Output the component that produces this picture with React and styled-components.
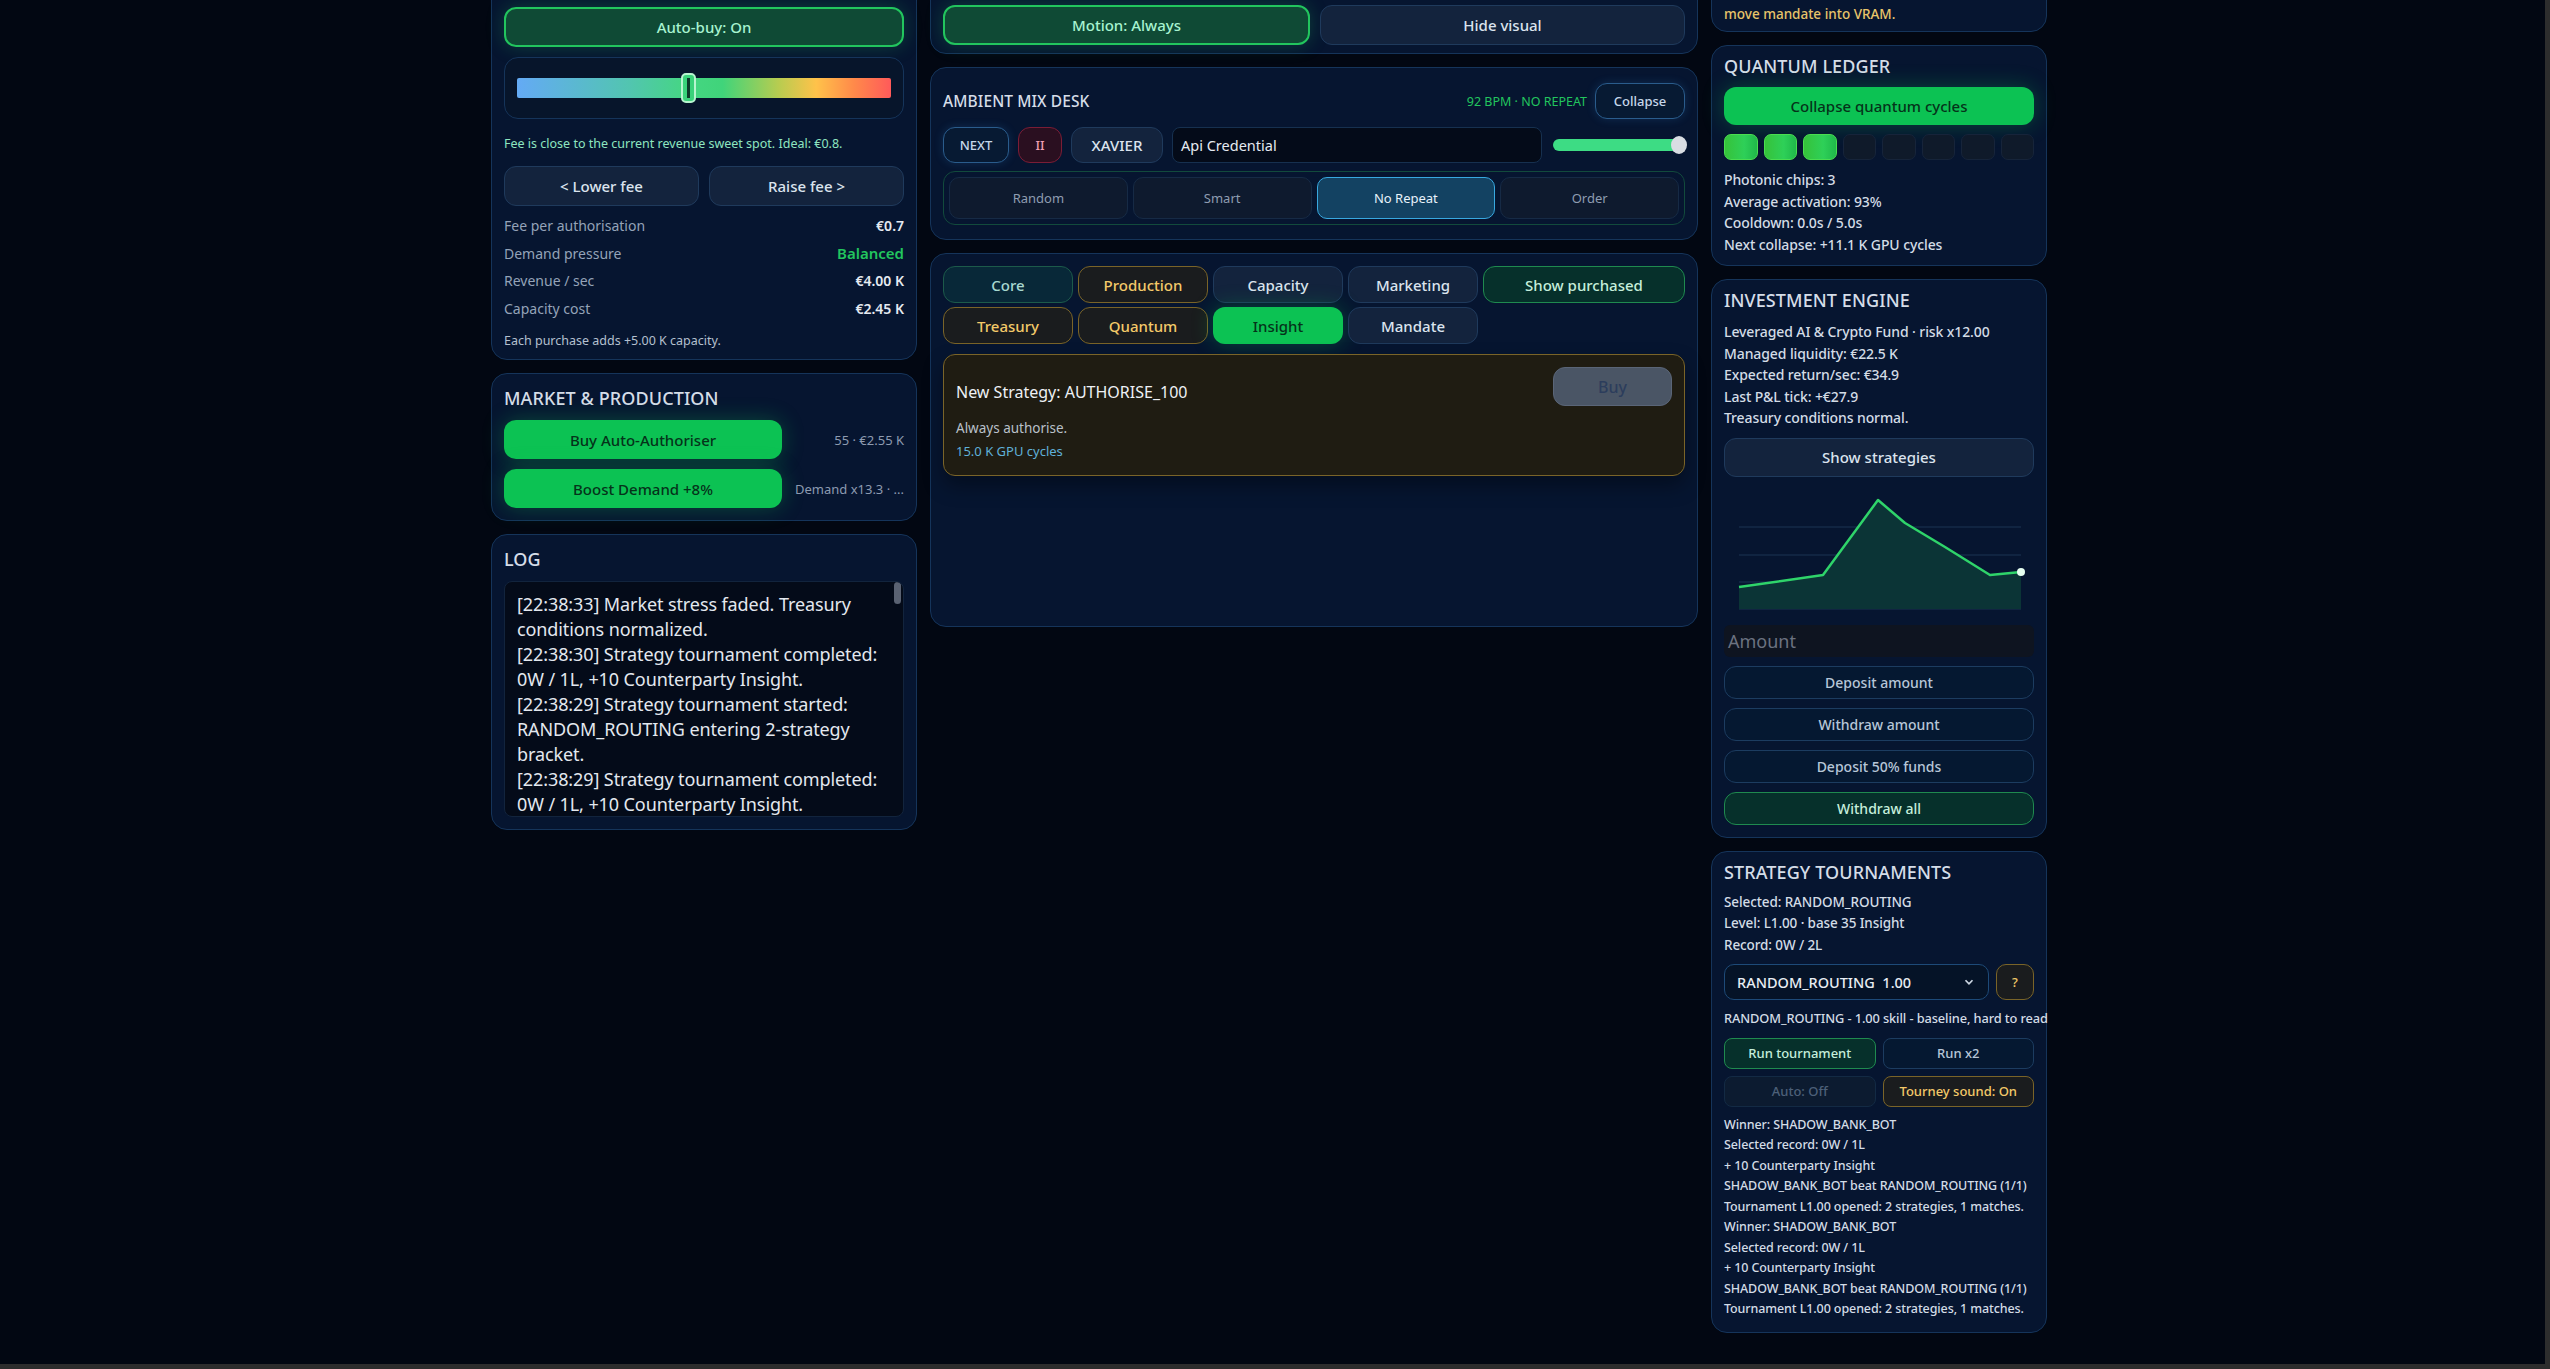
import React from "react";
import styled, { createGlobalStyle, css } from "styled-components";

const Global = createGlobalStyle`
  html, body { margin: 0; padding: 0; background: #2d2d2d; overflow: hidden; }
  body { font-family: "Noto Sans", "Open Sans", sans-serif; }
  * { box-sizing: border-box; }
`;

const Screen = styled.div`
  width: 2545px; height: 1364px; background: #020712; overflow: hidden;
  display: flex; align-items: flex-start; gap: 13px; padding-left: 491px;
`;
const Column = styled.div`
  width: ${p => p.$w}px; display: flex; flex-direction: column; gap: 13px;
  margin-top: ${p => p.$top || 0}px;
`;
const Panel = styled.section`
  background: #061530; border: 1.5px solid #15345a; border-radius: 16px;
  padding: ${p => p.$pad || "12px 12px 14px"};
  display: flex; flex-direction: column; gap: ${p => p.$gap ?? 10}px;
`;
const Title = styled.h2`
  margin: 0; font-size: ${p => p.$size || 18}px; font-weight: 500; color: #d5dde8; letter-spacing: 0.1px;
  line-height: 24px;
`;
const Btn = styled.button`
  font-family: inherit; border-radius: ${p => p.$r || 12}px; height: ${p => p.$h || 40}px;
  font-size: ${p => p.$fs || 15}px; font-weight: 500; cursor: pointer; padding: 0 8px; white-space: nowrap;
  width: ${p => p.$w ? p.$w + "px" : "100%"}; flex: ${p => p.$flex || "none"};
  border: 1.5px solid #1f3a5c; background: #13233d; color: #dbe3ee;
  ${p => p.$v === "toggle" && css`background:#0f4a35;border:2px solid #22c55e;color:#a7f3d0;box-shadow:0 0 18px rgba(34,197,94,.25);`}
  ${p => p.$v === "solid" && css`background:#0cc253;border:none;color:#05331a;box-shadow:0 0 22px rgba(12,194,83,.3);`}
  ${p => p.$v === "outline" && css`background:#051831;border:1.5px solid #1c3c60;color:#b7c6d8;`}
  ${p => p.$v === "outlineGreen" && css`background:#06302b;border:1.5px solid #1f8a4f;color:#c5eedb;`}
  ${p => p.$v === "gold" && css`background:#1a1c1e;border:1.5px solid #7a6428;color:#f3c969;`}
  ${p => p.$v === "tealTab" && css`background:#082838;border:1.5px solid #1c5a4a;color:#a8d8d0;`}
  ${p => p.$v === "dim" && css`background:#0c1b30;border:1.5px solid #132a44;color:#4d6079;`}
  ${p => p.$v === "gray" && css`background:#4a5565;border:1.5px solid #5a6577;color:#2c3d5c;`}
  ${p => p.$v === "blue" && css`background:#071a33;border:1.5px solid #2a5c8c;color:#c6d7ea;box-shadow:0 0 10px rgba(56,140,220,.2);`}
  ${p => p.$v === "red" && css`background:#2a0f20;border:1.5px solid #7a1d36;color:#f0a0b4;`}
`;

/* left */
const SliderBox = styled.div`
  border: 1.5px solid #15345a; border-radius: 14px; height: 62px; background: #07152b;
  display: flex; align-items: center; padding: 0 12px; position: relative;
`;
const Gradient = styled.div`
  height: 20px; width: 100%; border-radius: 2px; position: relative;
  background: linear-gradient(90deg,#64aaf5 0%,#52c5b0 30%,#45d683 45%,#40d47a 55%,#b8cc50 70%,#ffc24a 80%,#ff8a4a 90%,#ff5a5a 100%);
`;
const Thumb = styled.div`
  position: absolute; left: 164px; top: -5px; width: 15px; height: 30px; border-radius: 5px;
  background: #3ad27a; border: 2px solid #b7f5cf;
  &::after { content:""; position:absolute; left:4px; top:3px; width:3px; height:20px; background:#0d3a2a; }
`;
const Hint = styled.p`margin: 6px 0 4px; font-size: 12.5px; color: #8ee6c0;`;
const Row = styled.div`display: flex; gap: ${p => p.$gap ?? 10}px; align-items: center;`;
const Stats = styled.div`display: flex; flex-direction: column; margin-top: -4px;`;
const Stat = styled.div`
  display: flex; justify-content: space-between; height: 27.5px; align-items: center; font-size: 14px;
  span:first-child { color: #94a3b8; }
  span:last-child { color: ${p => p.$green ? "#22c55e" : "#e5eaf1"}; font-weight: 600; font-size: ${p => p.$green ? 15 : 14}px; }
`;
const Small = styled.p`margin: 0; font-size: 12.5px; color: #b4c0cf;`;
const MarketRow = styled.div`display: flex; align-items: center; justify-content: space-between; gap: 8px;`;
const Side = styled.span`font-size: 13px; color: #8d9bb0; white-space: nowrap;`;
const LogBox = styled.div`
  background: #040b19; border: 1.5px solid #12243d; border-radius: 8px; height: 236px; overflow: hidden;
  padding: 10px 20px 0 12px; position: relative; font-size: 18px; line-height: 25px; color: #e3e8ef;
  letter-spacing: -0.1px;
`;
const ScrollThumb = styled.div`position:absolute; right:2px; top:0; width:7px; height:22px; border-radius:4px; background:#5a6272;`;

/* middle */
const MixHead = styled.div`display:flex; align-items:center; justify-content:space-between; margin-top:2px;`;
const Bpm = styled.span`font-size: 12.5px; color: #22c55e; margin-right: 8px;`;
const CredInput = styled.div`
  flex: 1; height: 36px; background: #040b19; border: 1.5px solid #16304f; border-radius: 8px;
  font-size: 14.5px; color: #e5eaf1; display: flex; align-items: center; padding: 0 8px;
`;
const Vol = styled.div`
  width: 132px; height: 12px; border-radius: 6px; background: #3ddc84; position: relative; margin-left: 2px;
  &::after { content:""; position:absolute; right:-2px; top:-3px; width:16px; height:18px; border-radius:50%; background:#d9dde3; }
`;
const Seg = styled.div`
  display: grid; grid-template-columns: repeat(4, 1fr); gap: 5px; padding: 5px;
  border: 1.5px solid #124a3c; border-radius: 12px;
`;
const SegBtn = styled.button`
  font-family: inherit; height: 42px; border-radius: 10px; font-size: 13px;
  background: ${p => p.$on ? "#134262" : "#0e1a2e"}; color: ${p => p.$on ? "#e8f2fb" : "#8f9db1"};
  border: 1.5px solid ${p => p.$on ? "#38a8e0" : "#162a45"};
`;
const Tabs = styled.div`display:grid; grid-template-columns: repeat(4,130px) 1fr; gap: 4px 5px;`;
const Card = styled.div`
  margin-top: 6px; background: #1f1c12; border: 1.5px solid #7a6428; border-radius: 12px;
  padding: 12px; display:flex; justify-content: space-between; align-items:flex-start;
  box-shadow: 0 10px 20px rgba(0,0,0,.35);
`;
const CardText = styled.div`display:flex; flex-direction:column;`;
const CardTitle = styled.div`font-size:16px; color:#eef1f5; margin-top: 14px; margin-bottom: 14px;`;
const CardDesc = styled.div`font-size:13.5px; color:#b9c0c9; line-height: 23px;`;
const CardCost = styled.div`font-size:13px; color:#5fb0d8; line-height: 23px;`;

/* right */
const Cut = styled.div`font-size:13.5px; color:#e8c46a; line-height:22px; font-weight:500; white-space: nowrap;`;
const Chips = styled.div`display:grid; grid-template-columns: repeat(8,1fr); gap:6px;`;
const Chip = styled.div`
  height: 26px; border-radius: 7px;
  background: ${p => p.$on ? "linear-gradient(90deg,#36c23a,#2ed058 60%,#20b84a)" : "#0f1a2a"};
  border: 1px solid ${p => p.$on ? "#4ade50" : "#16243a"};
`;
const Lines = styled.div`
  display:flex; flex-direction:column; font-size:${p => p.$fs || 14}px; line-height:${p => p.$lh || 21.5}px;
  color:#d3dce6; font-weight:500; white-space: nowrap; letter-spacing: -0.1px;
`;
const AmountInput = styled.div`
  height: 32px; background:#0e1420; border-radius:6px; font-size:18px; color:#6b7280; padding: 0 4px;
  display:flex; align-items:center;
`;
const Select = styled.div`
  flex:1; height:36px; border:1.5px solid #1d4a78; border-radius:10px; background:#051327;
  display:flex; align-items:center; justify-content:space-between; padding: 0 12px;
  font-size:14.5px; color:#e8edf3; font-weight:500; white-space: pre;
`;
const Grid2 = styled.div`display:grid; grid-template-columns:1fr 1fr; gap:7px 7px;`;

const Chart = () => (
  <svg width="311" height="130" viewBox="0 0 311 130">
    {[41, 69, 96, 123].map(y => <line key={y} x1="15" x2="297" y1={y} y2={y} stroke="#1b3552" strokeWidth="1" />)}
    <path d="M15 101 L99 89 L154 14 L181 37 L221 61 L266 89 L297 86 L297 123 L15 123 Z" fill="#0b3436" />
    <polyline points="15,101 99,89 154,14 181,37 221,61 266,89 297,86" fill="none" stroke="#2fd46a" strokeWidth="2.5" strokeLinejoin="round" />
    <circle cx="297" cy="86" r="4" fill="#e6fff0" />
  </svg>
);

export default function App() {
  return (
    <>
      <Global />
      <Screen>
        <Column $w={426} $top={-20}>
          <Panel $gap={10} $pad="26px 12px 10px">
            <Btn $v="toggle">Auto-buy: On</Btn>
            <SliderBox>
              <Gradient><Thumb /></Gradient>
            </SliderBox>
            <Hint>Fee is close to the current revenue sweet spot. Ideal: €0.8.</Hint>
            <Row>
              <Btn $flex="1">&lt; Lower fee</Btn>
              <Btn $flex="1">Raise fee &gt;</Btn>
            </Row>
            <Stats>
              <Stat><span>Fee per authorisation</span><span>€0.7</span></Stat>
              <Stat $green><span>Demand pressure</span><span>Balanced</span></Stat>
              <Stat><span>Revenue / sec</span><span>€4.00 K</span></Stat>
              <Stat><span>Capacity cost</span><span>€2.45 K</span></Stat>
            </Stats>
            <Small>Each purchase adds +5.00 K capacity.</Small>
          </Panel>
          <Panel $gap={10} $pad="12px 12px 12px">
            <Title>MARKET &amp; PRODUCTION</Title>
            <MarketRow><Btn $v="solid" $h={39} $w={278}>Buy Auto-Authoriser</Btn><Side>55 · €2.55 K</Side></MarketRow>
            <MarketRow><Btn $v="solid" $h={39} $w={278}>Boost Demand +8%</Btn><Side>Demand x13.3 · ...</Side></MarketRow>
          </Panel>
          <Panel $gap={10} $pad="12px 12px 12px">
            <Title>LOG</Title>
            <LogBox>
              <ScrollThumb />
              [22:38:33] Market stress faded. Treasury conditions normalized.<br />
              [22:38:30] Strategy tournament completed: 0W / 1L, +10 Counterparty Insight.<br />
              [22:38:29] Strategy tournament started: RANDOM_ROUTING entering 2-strategy bracket.<br />
              [22:38:29] Strategy tournament completed: 0W / 1L, +10 Counterparty Insight.<br />
              [22:38:28] Strategy tournament started.
            </LogBox>
          </Panel>
        </Column>

        <Column $w={768} $top={-20}>
          <Panel $pad="24px 12px 8px">
            <Row $gap={10}>
              <Btn $v="toggle" $flex="1">Motion: Always</Btn>
              <Btn $flex="1">Hide visual</Btn>
            </Row>
          </Panel>
          <Panel $gap={8} $pad="13px 12px 14px">
            <MixHead>
              <Title $size={15.5}>AMBIENT MIX DESK</Title>
              <Row $gap={0}><Bpm>92 BPM · NO REPEAT</Bpm><Btn $v="blue" $w={90} $h={36} $fs={13}>Collapse</Btn></Row>
            </MixHead>
            <Row $gap={9}>
              <Btn $v="blue" $w={66} $h={36} $fs={13}>NEXT</Btn>
              <Btn $v="red" $w={44} $h={36} $fs={13}>II</Btn>
              <Btn $w={92} $h={36} $fs={15}>XAVIER</Btn>
              <CredInput>Api Credential</CredInput>
              <Vol />
            </Row>
            <Seg>
              <SegBtn>Random</SegBtn>
              <SegBtn>Smart</SegBtn>
              <SegBtn $on>No Repeat</SegBtn>
              <SegBtn>Order</SegBtn>
            </Seg>
          </Panel>
          <Panel $gap={4} $pad="12px 12px 150px">
            <Tabs>
              <Btn $v="tealTab" $h={37}>Core</Btn>
              <Btn $v="gold" $h={37}>Production</Btn>
              <Btn $h={37}>Capacity</Btn>
              <Btn $h={37}>Marketing</Btn>
              <Btn $v="outlineGreen" $h={37}>Show purchased</Btn>
              <Btn $v="gold" $h={37}>Treasury</Btn>
              <Btn $v="gold" $h={37}>Quantum</Btn>
              <Btn $v="solid" $h={37}>Insight</Btn>
              <Btn $h={37}>Mandate</Btn>
            </Tabs>
            <Card>
              <CardText>
                <CardTitle>New Strategy: AUTHORISE_100</CardTitle>
                <CardDesc>Always authorise.</CardDesc>
                <CardCost>15.0 K GPU cycles</CardCost>
              </CardText>
              <Btn $v="gray" $w={119} $h={39} $fs={16}>Buy</Btn>
            </Card>
          </Panel>
        </Column>

        <Column $w={336} $top={-20}>
          <Panel $pad="0 12px 6px" $gap={0}>
            <Cut>cap. Buy VRAM or use Xavier Re-initialization to<br />move mandate into VRAM.</Cut>
          </Panel>
          <Panel $gap={9} $pad="8px 12px 10px">
            <Title>QUANTUM LEDGER</Title>
            <Btn $v="solid" $h={38} $fs={15}>Collapse quantum cycles</Btn>
            <Chips>
              {[1,1,1,0,0,0,0,0].map((o, i) => <Chip key={i} $on={o} />)}
            </Chips>
            <Lines>
              <span>Photonic chips: 3</span>
              <span>Average activation: 93%</span>
              <span>Cooldown: 0.0s / 5.0s</span>
              <span>Next collapse: +11.1 K GPU cycles</span>
            </Lines>
          </Panel>
          <Panel $gap={9} $pad="8px 12px 12px">
            <Title>INVESTMENT ENGINE</Title>
            <Lines>
              <span>Leveraged AI &amp; Crypto Fund · risk x12.00</span>
              <span>Managed liquidity: €22.5 K</span>
              <span>Expected return/sec: €34.9</span>
              <span>Last P&amp;L tick: +€27.9</span>
              <span>Treasury conditions normal.</span>
            </Lines>
            <Btn $h={39} $fs={15}>Show strategies</Btn>
            <Chart />
            <AmountInput>Amount</AmountInput>
            <Btn $v="outline" $h={33} $fs={14}>Deposit amount</Btn>
            <Btn $v="outline" $h={33} $fs={14}>Withdraw amount</Btn>
            <Btn $v="outline" $h={33} $fs={14}>Deposit 50% funds</Btn>
            <Btn $v="outlineGreen" $h={33} $fs={14}>Withdraw all</Btn>
          </Panel>
          <Panel $gap={8} $pad="8px 12px 12px">
            <Title>STRATEGY TOURNAMENTS</Title>
            <Lines $fs={13.5}>
              <span>Selected: RANDOM_ROUTING</span>
              <span>Level: L1.00 · base 35 Insight</span>
              <span>Record: 0W / 2L</span>
            </Lines>
            <Row $gap={7}>
              <Select>{"RANDOM_ROUTING  1.00"}<svg width="14" height="14" viewBox="0 0 24 24" fill="none" stroke="#cbd5e1" strokeWidth="3"><path d="M6 9l6 6 6-6" /></svg></Select>
              <Btn $v="gold" $w={38} $h={36} $fs={13} $r={10}>?</Btn>
            </Row>
            <Lines $fs={12.8}><span>RANDOM_ROUTING - 1.00 skill - baseline, hard to read</span></Lines>
            <Grid2>
              <Btn $v="outlineGreen" $h={31} $fs={13} $r={8}>Run tournament</Btn>
              <Btn $v="outline" $h={31} $fs={13} $r={8}>Run x2</Btn>
              <Btn $v="dim" $h={31} $fs={13} $r={8}>Auto: Off</Btn>
              <Btn $v="gold" $h={31} $fs={13} $r={8}>Tourney sound: On</Btn>
            </Grid2>
            <Lines $fs={12.5} $lh={20.5}>
              <span>Winner: SHADOW_BANK_BOT</span>
              <span>Selected record: 0W / 1L</span>
              <span>+ 10 Counterparty Insight</span>
              <span>SHADOW_BANK_BOT beat RANDOM_ROUTING (1/1)</span>
              <span>Tournament L1.00 opened: 2 strategies, 1 matches.</span>
              <span>Winner: SHADOW_BANK_BOT</span>
              <span>Selected record: 0W / 1L</span>
              <span>+ 10 Counterparty Insight</span>
              <span>SHADOW_BANK_BOT beat RANDOM_ROUTING (1/1)</span>
              <span>Tournament L1.00 opened: 2 strategies, 1 matches.</span>
            </Lines>
          </Panel>
        </Column>
      </Screen>
    </>
  );
}
